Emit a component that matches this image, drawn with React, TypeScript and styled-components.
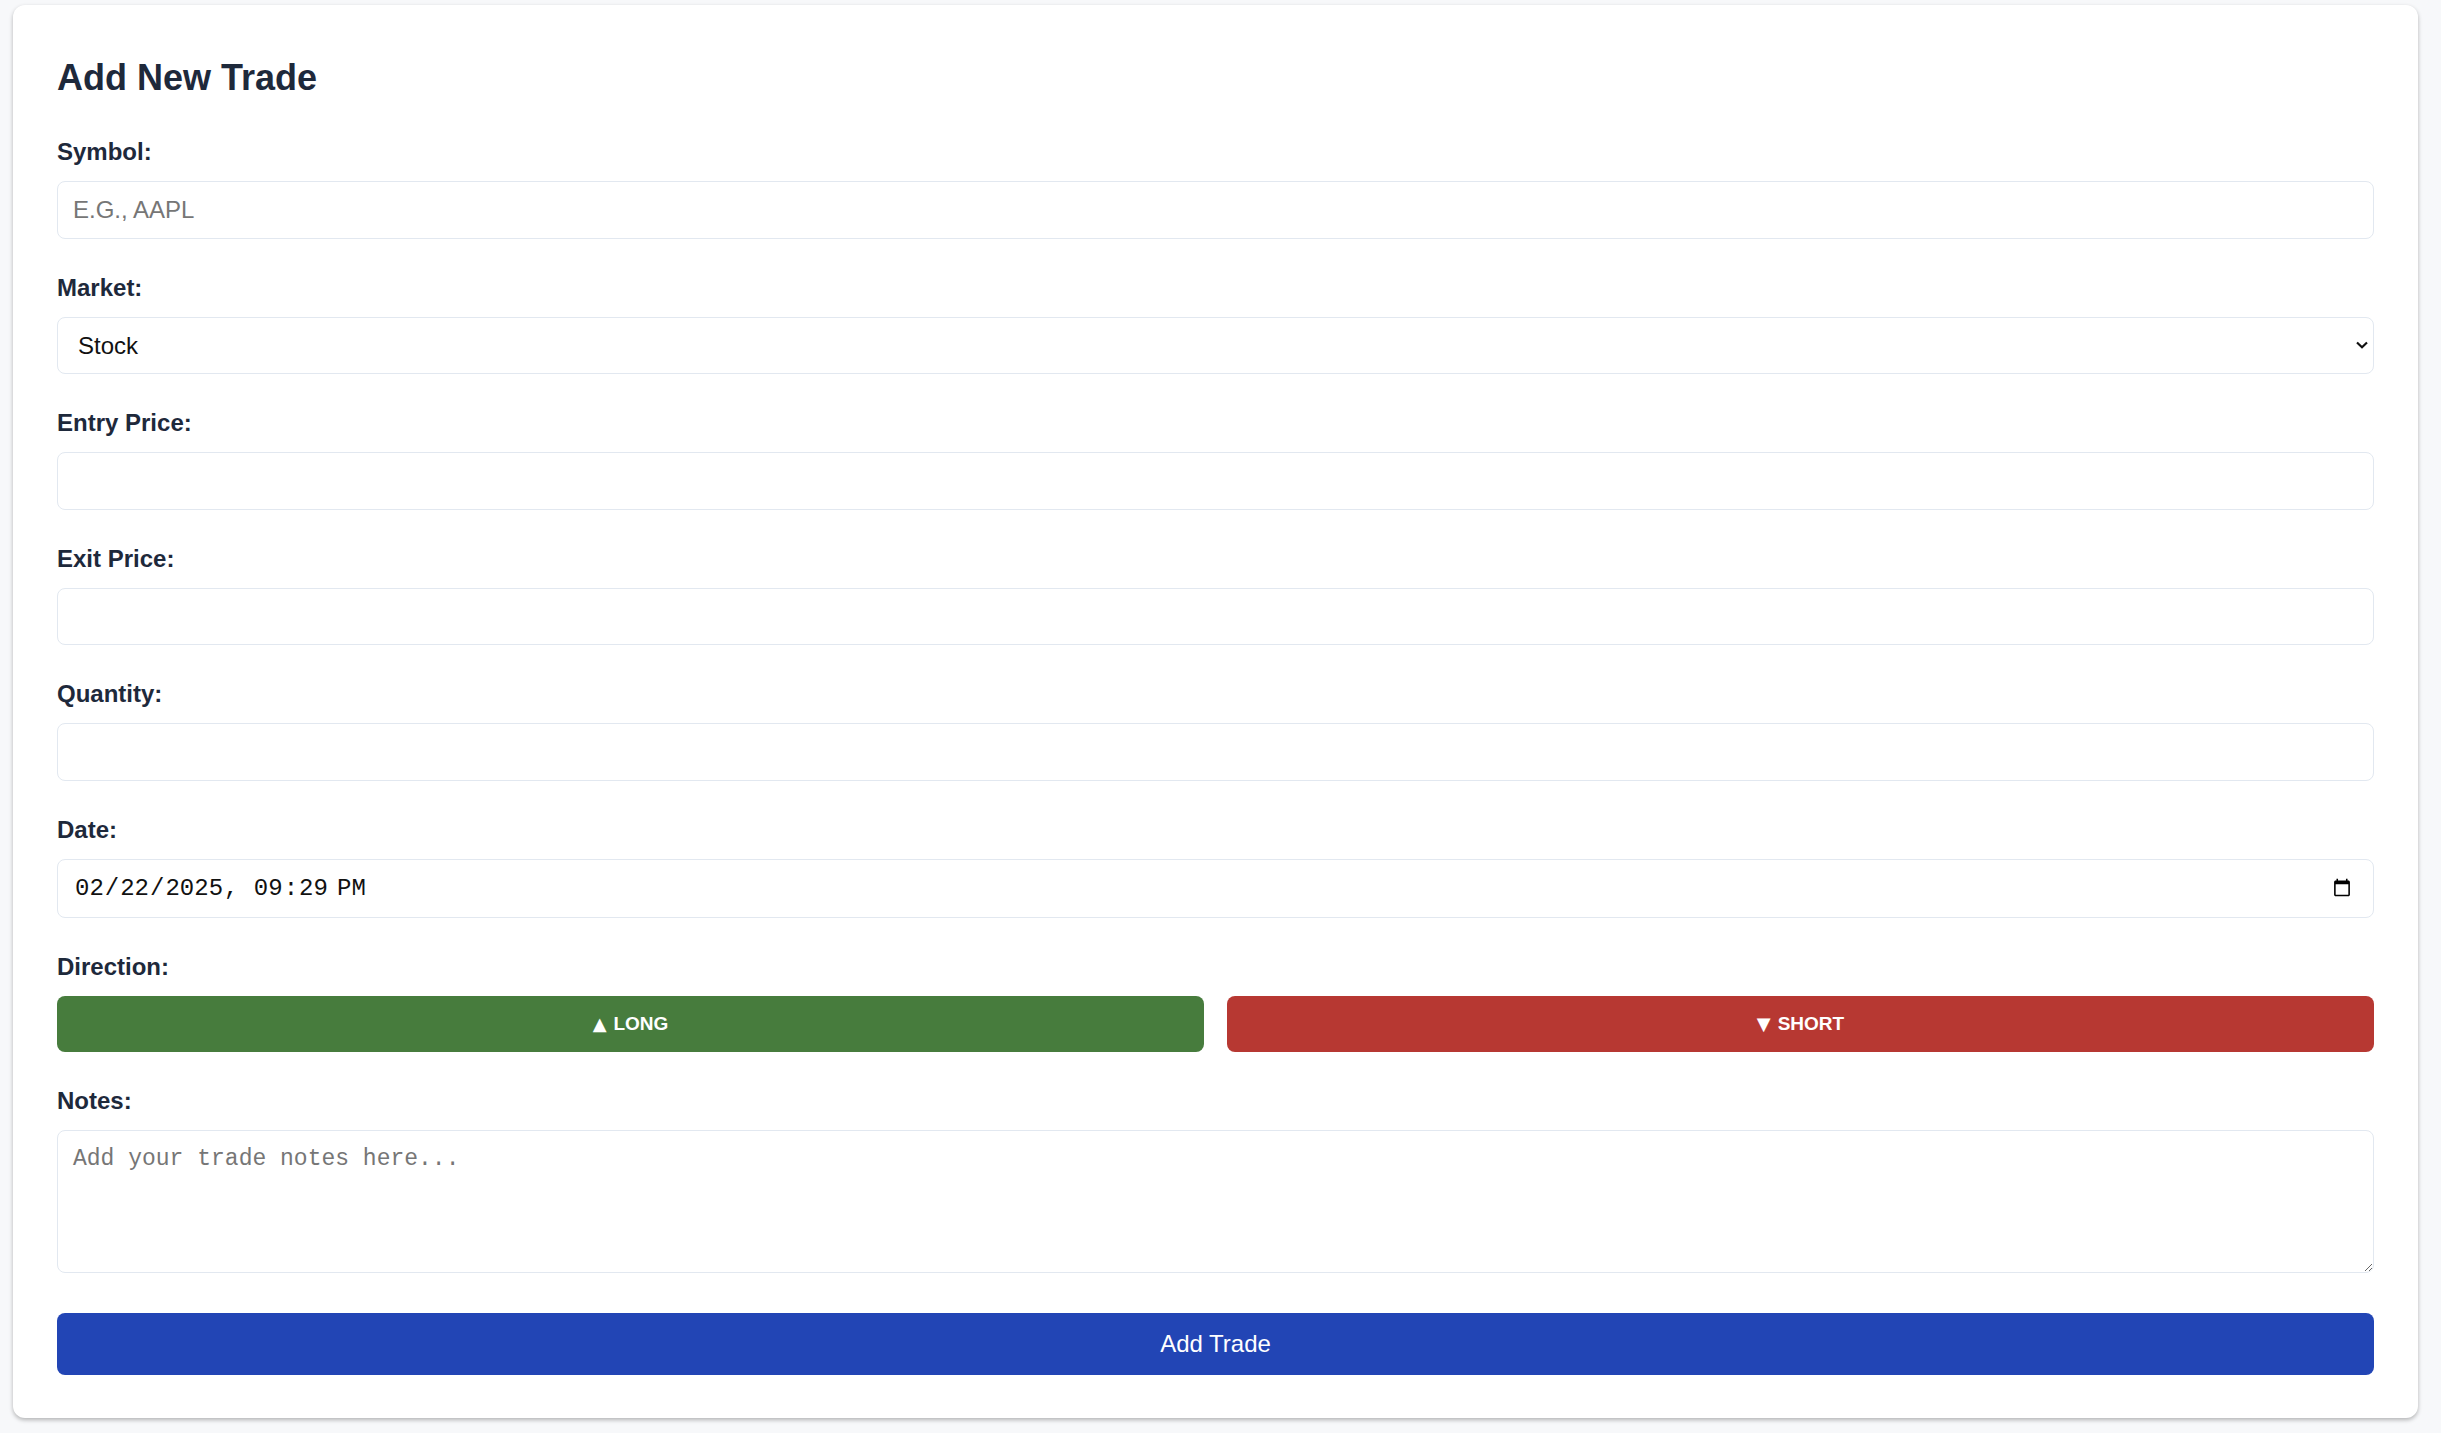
import React, { useState } from 'react'
import styled, { createGlobalStyle } from 'styled-components'

const GlobalStyle = createGlobalStyle`
    body {
        margin: 0;
        background: #f7f8fa;
        font-family: 'Liberation Sans', Arial, sans-serif;
    }
`

const AddTradeForm: React.FC = () => {
    const [direction, setDirection] = useState<'long' | 'short'>('long')

    return (
        <StPage>
            <GlobalStyle />
            <StCard>
                <StTitle>Add New Trade</StTitle>
                <StForm onSubmit={(e) => e.preventDefault()}>
                    <StField>
                        <StLabel>Symbol:</StLabel>
                        <StInput type="text" placeholder="E.G., AAPL" />
                    </StField>
                    <StField>
                        <StLabel>Market:</StLabel>
                        <StSelectWrap>
                            <StSelect defaultValue="stock">
                                <option value="stock">Stock</option>
                                <option value="crypto">Crypto</option>
                                <option value="forex">Forex</option>
                            </StSelect>
                            <StChevron width="12" height="8" viewBox="0 0 12 8">
                                <path d="M1 1.5 L6 6.2 L11 1.5" fill="none" stroke="#111" strokeWidth="2.2" />
                            </StChevron>
                        </StSelectWrap>
                    </StField>
                    <StField>
                        <StLabel>Entry Price:</StLabel>
                        <StInput type="number" />
                    </StField>
                    <StField>
                        <StLabel>Exit Price:</StLabel>
                        <StInput type="number" />
                    </StField>
                    <StField>
                        <StLabel>Quantity:</StLabel>
                        <StInput type="number" />
                    </StField>
                    <StField>
                        <StLabel>Date:</StLabel>
                        <StDateInput type="datetime-local" defaultValue="2025-02-22T21:29" />
                    </StField>
                    <StField>
                        <StLabel>Direction:</StLabel>
                        <StDirectionRow>
                            <StDirectionButton type="button" $tone="long" onClick={() => setDirection('long')} aria-pressed={direction === 'long'}>
                                <StArrow>▲</StArrow>LONG
                            </StDirectionButton>
                            <StDirectionButton type="button" $tone="short" onClick={() => setDirection('short')} aria-pressed={direction === 'short'}>
                                <StArrow>▼</StArrow>SHORT
                            </StDirectionButton>
                        </StDirectionRow>
                    </StField>
                    <StField>
                        <StLabel>Notes:</StLabel>
                        <StTextarea placeholder="Add your trade notes here..." />
                    </StField>
                    <StSubmit type="submit">Add Trade</StSubmit>
                </StForm>
            </StCard>
        </StPage>
    )
}

const StPage = styled.div`
    padding: 5px 23px 18px 13px;
`

const StCard = styled.div`
    background: #fff;
    border-radius: 12px;
    box-shadow: 0 2px 4px rgba(0, 0, 0, 0.28);
    padding: 44px 44px 43px;
`

const StTitle = styled.h2`
    margin: 7px 0 38px;
    font-size: 36px;
    line-height: 43px;
    font-weight: 700;
    color: #1e293b;
`

const StForm = styled.form`
    display: flex;
    flex-direction: column;
    gap: 34px;
`

const StField = styled.div`
    display: flex;
    flex-direction: column;
`

const StLabel = styled.label`
    display: block;
    font-size: 24px;
    line-height: 29px;
    font-weight: 700;
    color: #1e293b;
    margin-bottom: 15px;
`

const StInput = styled.input`
    box-sizing: border-box;
    width: 100%;
    height: 57.6px;
    padding: 0 15px;
    border: 1px solid #e2e8f0;
    border-radius: 8px;
    background: #fff;
    font-family: 'Liberation Sans', Arial, sans-serif;
    font-size: 24px;
    color: #111;
    outline: none;

    &::placeholder {
        color: #767676;
    }

    &::-webkit-outer-spin-button,
    &::-webkit-inner-spin-button {
        -webkit-appearance: none;
        margin: 0;
    }
`

const StSelectWrap = styled.div`
    position: relative;
`

const StSelect = styled.select`
    box-sizing: border-box;
    width: 100%;
    height: 57.6px;
    padding: 0 20px;
    border: 1px solid #e2e8f0;
    border-radius: 8px;
    background: #fff;
    appearance: none;
    font-family: 'Liberation Sans', Arial, sans-serif;
    font-size: 24px;
    color: #111;
    outline: none;
`

const StChevron = styled.svg`
    position: absolute;
    right: 6px;
    top: 50%;
    transform: translateY(-50%);
    pointer-events: none;
`

const StDateInput = styled(StInput)`
    height: 59px;
    padding: 0 16px;
    font-family: 'Liberation Mono', 'DejaVu Sans Mono', monospace;
    font-size: 24px;

    &::-webkit-calendar-picker-indicator {
        width: 20px;
        height: 20px;
        margin-right: 3px;
    }
`

const StDirectionRow = styled.div`
    display: grid;
    grid-template-columns: 1fr 1fr;
    gap: 23px;
`

const StDirectionButton = styled.button<{ $tone: 'long' | 'short' }>`
    display: flex;
    align-items: center;
    justify-content: center;
    height: 56px;
    border: none;
    border-radius: 8px;
    background: ${({ $tone }) => ($tone === 'long' ? '#477c3d' : '#b73832')};
    color: #fff;
    font-family: 'Liberation Sans', Arial, sans-serif;
    font-size: 19px;
    font-weight: 700;
    cursor: pointer;
`

const StArrow = styled.span`
    font-family: 'DejaVu Sans', sans-serif;
    font-size: 18px;
    margin-right: 7px;
`

const StTextarea = styled.textarea`
    box-sizing: border-box;
    width: 100%;
    height: 143px;
    padding: 15px;
    border: 1px solid #e2e8f0;
    border-radius: 8px;
    font-family: 'Liberation Mono', 'DejaVu Sans Mono', monospace;
    font-size: 23px;
    color: #111;
    outline: none;

    &::placeholder {
        color: #767676;
    }
`

const StSubmit = styled.button`
    margin-top: 6px;
    height: 62px;
    border: none;
    border-radius: 8px;
    background: #2245b5;
    color: #fff;
    font-family: 'Liberation Sans', Arial, sans-serif;
    font-size: 24px;
    cursor: pointer;
`

export default AddTradeForm
